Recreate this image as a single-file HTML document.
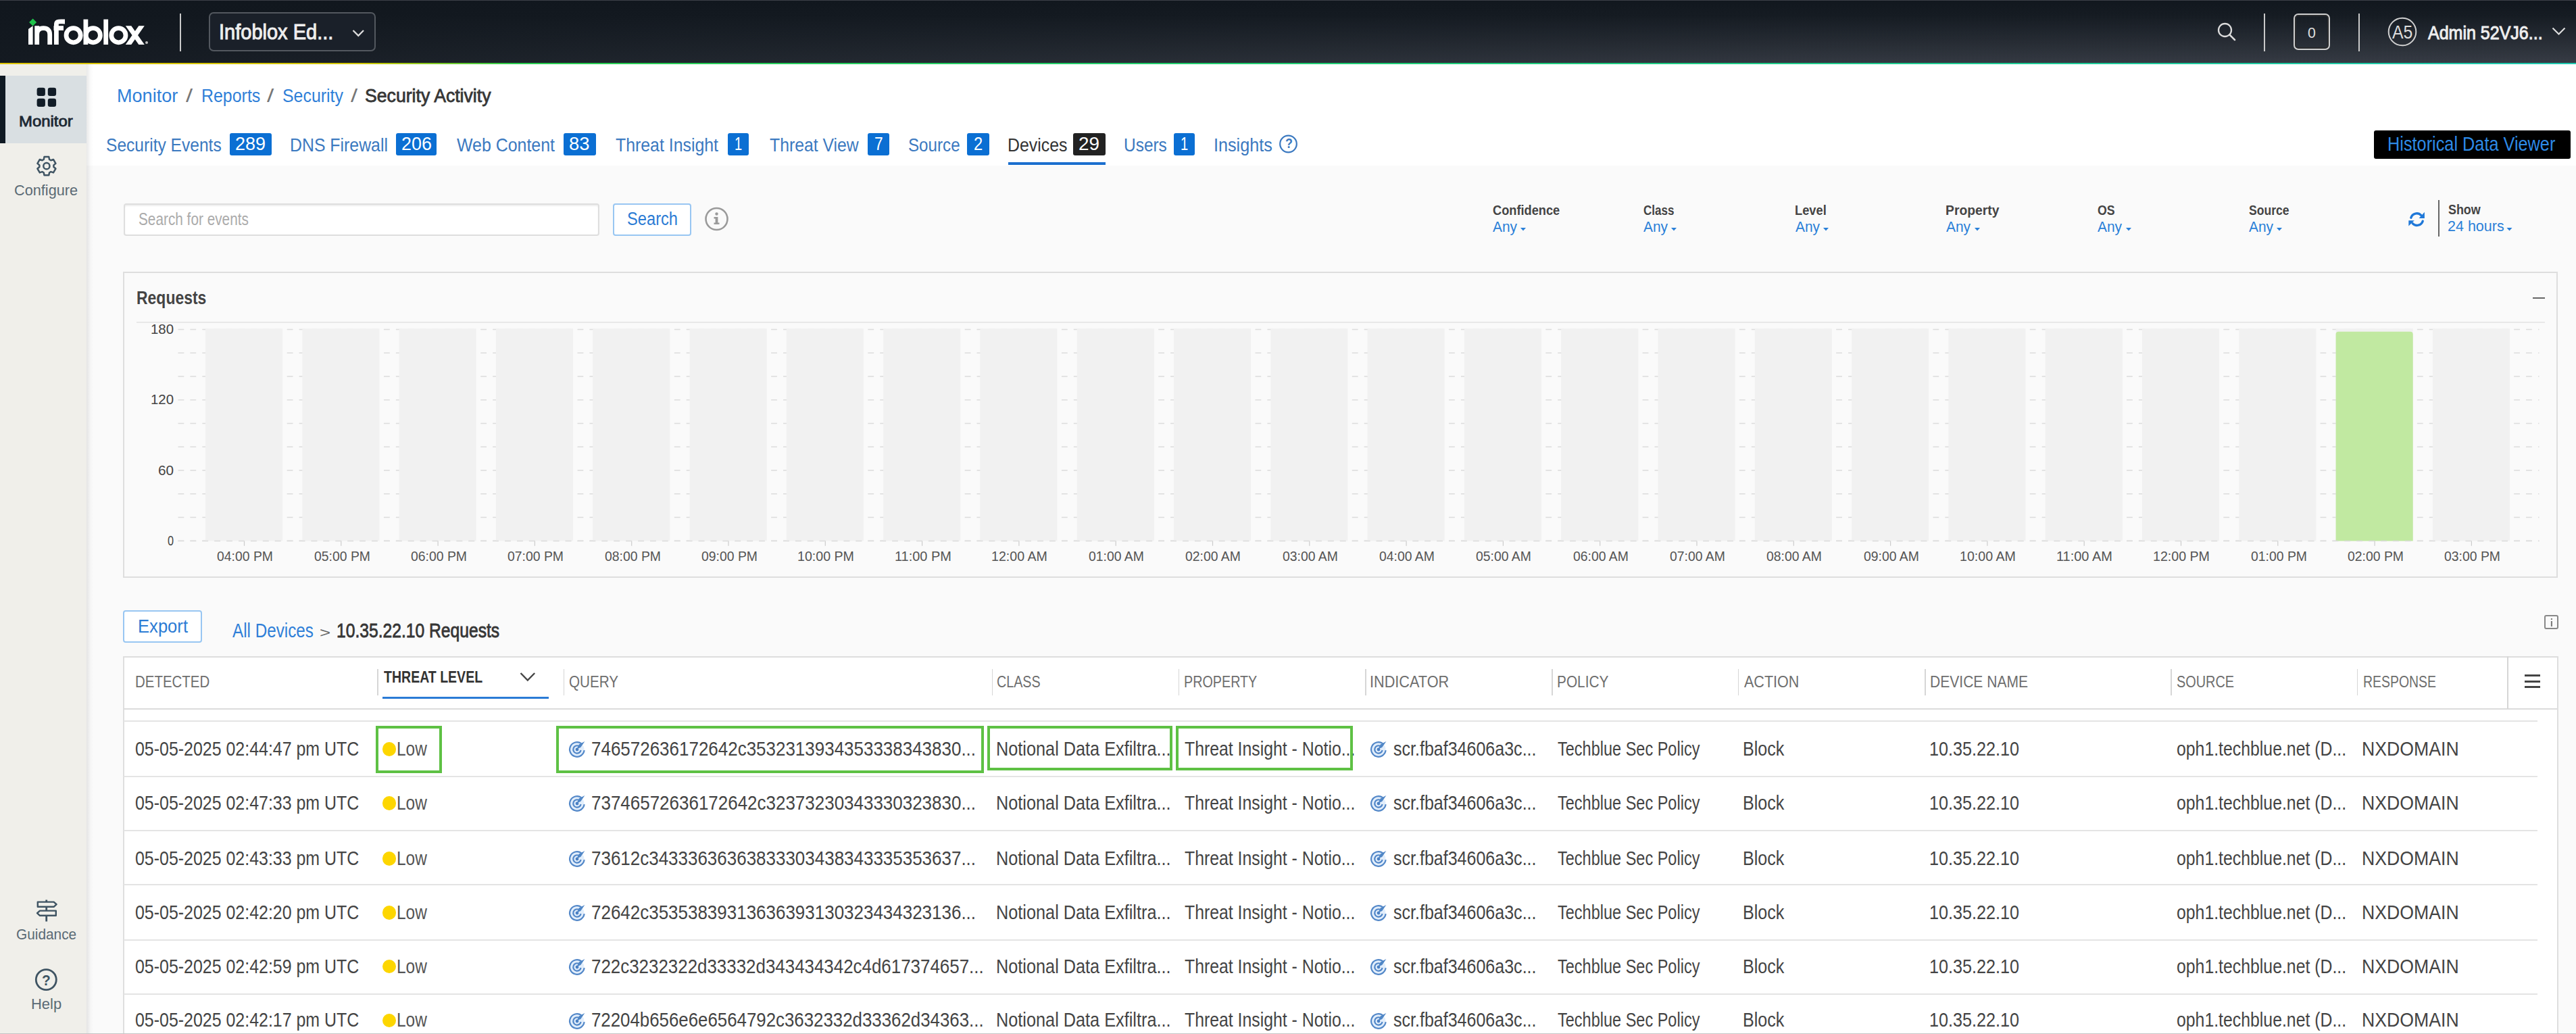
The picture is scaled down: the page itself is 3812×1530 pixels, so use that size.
<!DOCTYPE html>
<html><head><meta charset="utf-8"><title>Security Activity</title>
<style>
html,body{margin:0;padding:0;}
body{width:3812px;height:1530px;overflow:hidden;position:relative;background:#fafafa;font-family:"Liberation Sans",sans-serif;}
.t{position:absolute;white-space:nowrap;line-height:1;transform-origin:0 0;}
svg{position:absolute;overflow:visible;}
</style></head><body>
<div style="position:absolute;left:0.00px;top:0.00px;width:3812.00px;height:94.00px;background:linear-gradient(to right, rgba(17,23,30,0.92) 0%, rgba(17,23,30,0.5) 35%, rgba(17,23,30,0.1) 70%, rgba(17,23,30,0) 100%), linear-gradient(to bottom, #11171e 0%, #161c23 25%, #373c45 100%);"></div>
<div style="position:absolute;left:0.00px;top:0.00px;width:3812.00px;height:1.00px;background:#3c4048;"></div>
<div style="position:absolute;left:0.00px;top:93.00px;width:3812.00px;height:2.00px;background:linear-gradient(to right, #dcc400 0%, #d2c600 14%, #2bcc50 20%, #1fcc77 55%, #1fc9b0 100%);"></div>
<svg style="left:0;top:0" width="240" height="94" viewBox="0 0 240 94">
<g fill="none" stroke="#ffffff" stroke-width="6.8" stroke-linecap="butt">
<path d="M54.7 66 V38.3 M54.7 51 C54.7 44.5 58.5 41.7 64.2 41.7 C70.2 41.7 73.7 44.8 73.7 51 V66"/>
<path d="M83.4 66 V36 C83.4 31 86.5 32 96 32"/>
<path d="M79.5 41.6 H94"/>
<circle cx="108.6" cy="52.2" r="10.6"/>
<path d="M126.9 28.6 V66"/>
<circle cx="137.8" cy="52.2" r="10.6"/>
<path d="M156.7 28.6 V66"/>
<circle cx="175.4" cy="52.2" r="10.6"/>
</g>
<path d="M42 43 L48.6 38.3 V66 H42 Z" fill="#fff"/>
<path d="M185.8 38.3 H194.3 L213.8 66 H205.3 Z M205.3 38.3 H213.8 L194.3 66 H185.8 Z" fill="#fff"/>
<path d="M48.6 27.4 L54.1 32.9 L48.6 38.4 L43.1 32.9 Z" fill="#1ec24a"/>
<circle cx="217" cy="63" r="2" fill="#bbb"/>
</svg>
<div style="position:absolute;left:266.00px;top:20.00px;width:2.00px;height:56.00px;background:#c9c9c9;"></div>
<div style="position:absolute;left:308.60px;top:18.20px;width:247.10px;height:57.60px;box-sizing:border-box;border:2px solid #53585f;border-radius:7px;background:#1a2029;"></div>
<div class="t" style="left:323.69px;top:30.83px;font-size:31.98px;color:#eeeeee;transform:scaleX(0.9075);-webkit-text-stroke:1px #eeeeee;">Infoblox Ed...</div>
<svg style="left:0;top:0" width="600" height="94"><path d="M522.5 45 L530.3 52.8 L538 45" fill="none" stroke="#dddddd" stroke-width="2.3"/></svg>
<svg style="left:3270px;top:20px" width="60" height="60"><circle cx="22.5" cy="24.5" r="9.5" fill="none" stroke="#dcdcdc" stroke-width="2.3"/><path d="M29.5 31.5 L37 39" stroke="#dcdcdc" stroke-width="2.5" stroke-linecap="round"/></svg>
<div style="position:absolute;left:3350.00px;top:20.00px;width:2.00px;height:56.00px;background:#c9c9c9;"></div>
<div style="position:absolute;left:3394.00px;top:20.00px;width:54.00px;height:54.00px;box-sizing:border-box;border:2px solid #cfcfcf;border-radius:7px;box-shadow:inset 0 0 0 2px #2b2c2e;"></div>
<div class="t" style="left:3414.60px;top:37.54px;font-size:21.80px;color:#e0e0e0;transform:scaleX(0.9750);">0</div>
<div style="position:absolute;left:3490.00px;top:20.00px;width:2.00px;height:56.00px;background:#c9c9c9;"></div>
<svg style="left:3520px;top:10px" width="80" height="80"><circle cx="35" cy="37" r="20.3" fill="none" stroke="#d0d0d0" stroke-width="2"/></svg>
<div class="t" style="left:3539.50px;top:34.22px;font-size:27.62px;color:#dddddd;transform:scaleX(0.8978);">A5</div>
<div class="t" style="left:3593.00px;top:33.93px;font-size:28.20px;color:#eeeeee;transform:scaleX(0.8874);-webkit-text-stroke:1px #eeeeee;">Admin 52VJ6...</div>
<svg style="left:3760px;top:30px" width="50" height="40"><path d="M17.5 11.5 L26.5 20.5 L35.5 11.5" fill="none" stroke="#dddddd" stroke-width="2.2"/></svg>
<div style="position:absolute;left:0.00px;top:95.00px;width:128.00px;height:1435.00px;background:#f0efea;"></div>
<div style="position:absolute;left:0.00px;top:112.00px;width:128.00px;height:100.00px;background:#d9dfe2;"></div>
<div style="position:absolute;left:0.00px;top:112.00px;width:8.00px;height:100.00px;background:#0f1923;"></div>
<svg style="left:0;top:100px" width="127" height="80"><g fill="#111c27"><rect x="54.6" y="29.8" width="12.3" height="12.2" rx="3.2"/><rect x="70.8" y="29.8" width="12.3" height="12.2" rx="3.2"/><rect x="54.6" y="45.8" width="12.3" height="12.2" rx="3.2"/><rect x="70.8" y="45.8" width="12.3" height="12.2" rx="3.2"/></g></svg>
<div class="t" style="left:27.90px;top:168.94px;font-size:21.80px;color:#1c2833;transform:scaleX(1.0977);-webkit-text-stroke:0.8px #1c2833;">Monitor</div>
<svg style="left:0;top:200px" width="127" height="80"><path d="M65.51 32.12 L72.29 32.12 L73.04 35.94 L75.28 37.23 L78.97 35.97 L82.36 41.84 L79.42 44.41 L79.42 46.99 L82.36 49.56 L78.97 55.43 L75.28 54.17 L73.04 55.46 L72.29 59.28 L65.51 59.28 L64.76 55.46 L62.52 54.17 L58.83 55.43 L55.44 49.56 L58.38 46.99 L58.38 44.41 L55.44 41.84 L58.83 35.97 L62.52 37.23 L64.76 35.94 Z" fill="none" stroke="#3f5463" stroke-width="2.5" stroke-linejoin="round"/><circle cx="68.9" cy="45.7" r="4.6" fill="none" stroke="#3f5463" stroke-width="2.5"/></svg>
<div class="t" style="left:21.00px;top:270.54px;font-size:21.80px;color:#5a6a75;transform:scaleX(0.9959);">Configure</div>
<svg style="left:40px;top:1320px" width="60" height="60"><g stroke="#3f5463" stroke-width="2.4" stroke-linejoin="round"><path d="M28.7 11.5 V43.5" fill="none" stroke-width="2.8"/><path d="M15.8 14.6 H39.6 L43.6 18.2 L39.6 21.8 H15.8 Z" fill="#f0efea"/><path d="M42.8 27.6 H19 L15 31.2 L19 34.8 H42.8 Z" fill="#f0efea"/></g></svg>
<div class="t" style="left:23.73px;top:1373.19px;font-size:21.51px;color:#5a6a75;transform:scaleX(0.9691);">Guidance</div>
<svg style="left:40px;top:1420px" width="60" height="60"><circle cx="28.3" cy="29.6" r="15" fill="none" stroke="#3f5463" stroke-width="2.8"/></svg>
<div class="t" style="left:61.54px;top:1439.54px;font-size:21.80px;font-weight:700;color:#3f5463;transform:scaleX(0.9583);">?</div>
<div class="t" style="left:45.97px;top:1475.03px;font-size:21.22px;color:#5a6a75;transform:scaleX(1.0349);">Help</div>
<div style="position:absolute;left:128.00px;top:95.00px;width:3684.00px;height:150.00px;background:#ffffff;"></div>
<div style="position:absolute;left:128.00px;top:95.00px;width:10.00px;height:1435.00px;background:linear-gradient(to right, rgba(0,0,0,0.085), rgba(0,0,0,0.02) 60%, rgba(0,0,0,0));"></div>
<div class="t" style="left:173.15px;top:128.09px;font-size:27.76px;color:#2f7fd8;transform:scaleX(0.9757);">Monitor</div>
<div class="t" style="left:275.30px;top:128.09px;font-size:27.76px;color:#777;transform:scaleX(1.3125);">/</div>
<div class="t" style="left:297.50px;top:128.09px;font-size:27.76px;color:#2f7fd8;transform:scaleX(0.8983);">Reports</div>
<div class="t" style="left:395.00px;top:128.09px;font-size:27.76px;color:#777;transform:scaleX(1.3375);">/</div>
<div class="t" style="left:418.10px;top:128.09px;font-size:27.76px;color:#2f7fd8;transform:scaleX(0.8977);">Security</div>
<div class="t" style="left:518.70px;top:128.09px;font-size:27.76px;color:#777;transform:scaleX(1.3125);">/</div>
<div class="t" style="left:540.34px;top:128.09px;font-size:27.76px;color:#363636;transform:scaleX(0.9597);-webkit-text-stroke:0.8px #363636;">Security Activity</div>
<div class="t" style="left:156.64px;top:199.58px;font-size:28.49px;color:#3b79c0;transform:scaleX(0.8624);">Security Events</div>
<div style="position:absolute;left:340.00px;top:196.50px;width:61.50px;height:33.50px;background:#0b6fd3;border-radius:3px;"></div>
<div class="t" style="left:348.40px;top:200.43px;font-size:26.89px;color:#ffffff;transform:scaleX(1.0048);">289</div>
<div class="t" style="left:429.26px;top:199.58px;font-size:28.49px;color:#3b79c0;transform:scaleX(0.8724);">DNS Firewall</div>
<div style="position:absolute;left:586.00px;top:196.50px;width:59.60px;height:33.50px;background:#0b6fd3;border-radius:3px;"></div>
<div class="t" style="left:593.50px;top:200.43px;font-size:26.89px;color:#ffffff;transform:scaleX(1.0025);">206</div>
<div class="t" style="left:676.00px;top:199.58px;font-size:28.49px;color:#3b79c0;transform:scaleX(0.8749);">Web Content</div>
<div style="position:absolute;left:834.00px;top:196.50px;width:47.50px;height:33.50px;background:#0b6fd3;border-radius:3px;"></div>
<div class="t" style="left:842.48px;top:200.43px;font-size:26.89px;color:#ffffff;transform:scaleX(1.0198);">83</div>
<div class="t" style="left:911.00px;top:199.58px;font-size:28.49px;color:#3b79c0;transform:scaleX(0.8728);">Threat Insight</div>
<div style="position:absolute;left:1077.00px;top:196.50px;width:31.00px;height:33.50px;background:#0b6fd3;border-radius:3px;"></div>
<div class="t" style="left:1086.50px;top:200.43px;font-size:26.89px;color:#ffffff;transform:scaleX(0.7500);">1</div>
<div class="t" style="left:1139.00px;top:199.58px;font-size:28.49px;color:#3b79c0;transform:scaleX(0.8695);">Threat View</div>
<div style="position:absolute;left:1284.00px;top:196.50px;width:32.00px;height:33.50px;background:#0b6fd3;border-radius:3px;"></div>
<div class="t" style="left:1293.65px;top:200.43px;font-size:26.89px;color:#ffffff;transform:scaleX(0.8462);">7</div>
<div class="t" style="left:1344.15px;top:199.58px;font-size:28.49px;color:#3b79c0;transform:scaleX(0.8487);">Source</div>
<div style="position:absolute;left:1431.00px;top:196.50px;width:33.00px;height:33.50px;background:#0b6fd3;border-radius:3px;"></div>
<div class="t" style="left:1441.12px;top:200.43px;font-size:26.89px;color:#ffffff;transform:scaleX(0.8846);">2</div>
<div class="t" style="left:1490.75px;top:199.58px;font-size:28.49px;color:#333333;transform:scaleX(0.8736);">Devices</div>
<div style="position:absolute;left:1588.00px;top:196.50px;width:48.00px;height:33.50px;background:#222222;border-radius:3px;"></div>
<div class="t" style="left:1596.46px;top:200.43px;font-size:26.89px;color:#ffffff;transform:scaleX(1.0377);">29</div>
<div style="position:absolute;left:1492.00px;top:240.00px;width:144.00px;height:4.00px;background:#1b6fce;"></div>
<div class="t" style="left:1662.88px;top:199.58px;font-size:28.49px;color:#3b79c0;transform:scaleX(0.8584);">Users</div>
<div style="position:absolute;left:1737.00px;top:196.50px;width:31.00px;height:33.50px;background:#0b6fd3;border-radius:3px;"></div>
<div class="t" style="left:1746.50px;top:200.43px;font-size:26.89px;color:#ffffff;transform:scaleX(0.7500);">1</div>
<div class="t" style="left:1796.23px;top:199.58px;font-size:28.49px;color:#3b79c0;transform:scaleX(0.8834);">Insights</div>
<svg style="left:1880px;top:190px" width="50" height="50"><circle cx="26.5" cy="23" r="12.3" fill="none" stroke="#3b79c0" stroke-width="2.2"/></svg>
<div class="t" style="left:1901.50px;top:203.19px;font-size:19.62px;font-weight:700;color:#3b79c0;transform:scaleX(0.9091);">?</div>
<div style="position:absolute;left:3512.50px;top:192.60px;width:291.20px;height:42.20px;background:#000;border-radius:3px;"></div>
<div class="t" style="left:3532.86px;top:199.39px;font-size:29.07px;color:#2d8ae6;transform:scaleX(0.8704);">Historical Data Viewer</div>
<div style="position:absolute;left:182.60px;top:300.80px;width:704.40px;height:47.80px;box-sizing:border-box;background:#fff;border:2px solid #dedede;border-radius:4px;box-shadow:inset 0 2px 2px rgba(0,0,0,0.07);"></div>
<div class="t" style="left:205.21px;top:310.85px;font-size:26.16px;color:#ababab;transform:scaleX(0.7944);">Search for events</div>
<div style="position:absolute;left:906.70px;top:300.80px;width:116.30px;height:48.50px;box-sizing:border-box;background:#fff;border:2px solid #98c6f2;border-radius:4px;"></div>
<div class="t" style="left:928.14px;top:310.22px;font-size:27.62px;color:#2b7bd4;transform:scaleX(0.8576);">Search</div>
<svg style="left:1030px;top:300px" width="60" height="50"><circle cx="30.5" cy="24" r="16" fill="none" stroke="#9a9a9a" stroke-width="2.6"/><rect x="28.6" y="21" width="3.8" height="10.5" fill="#9a9a9a"/><rect x="26.5" y="21" width="4" height="2.6" fill="#9a9a9a"/><rect x="26.5" y="29.5" width="8" height="2.4" fill="#9a9a9a"/><circle cx="30.5" cy="16.5" r="2.2" fill="#9a9a9a"/></svg>
<div class="t" style="left:2208.60px;top:301.71px;font-size:19.48px;font-weight:700;color:#444444;transform:scaleX(0.9362);">Confidence</div>
<div class="t" style="left:2208.60px;top:325.61px;font-size:21.37px;color:#2a80d8;transform:scaleX(0.9805);">Any</div>
<svg style="left:2248.0px;top:332px" width="14" height="14"><path d="M2 5 L10 5 L6 9.5 Z" fill="#2a80d8"/></svg>
<div class="t" style="left:2432.00px;top:301.71px;font-size:19.48px;font-weight:700;color:#444444;transform:scaleX(0.8768);">Class</div>
<div class="t" style="left:2432.00px;top:325.61px;font-size:21.37px;color:#2a80d8;transform:scaleX(0.9805);">Any</div>
<svg style="left:2471.4px;top:332px" width="14" height="14"><path d="M2 5 L10 5 L6 9.5 Z" fill="#2a80d8"/></svg>
<div class="t" style="left:2655.66px;top:301.71px;font-size:19.48px;font-weight:700;color:#444444;transform:scaleX(0.9385);">Level</div>
<div class="t" style="left:2656.60px;top:325.61px;font-size:21.37px;color:#2a80d8;transform:scaleX(0.9805);">Any</div>
<svg style="left:2696.0px;top:332px" width="14" height="14"><path d="M2 5 L10 5 L6 9.5 Z" fill="#2a80d8"/></svg>
<div class="t" style="left:2879.41px;top:301.71px;font-size:19.48px;font-weight:700;color:#444444;transform:scaleX(0.9920);">Property</div>
<div class="t" style="left:2880.40px;top:325.61px;font-size:21.37px;color:#2a80d8;transform:scaleX(0.9805);">Any</div>
<svg style="left:2919.8px;top:332px" width="14" height="14"><path d="M2 5 L10 5 L6 9.5 Z" fill="#2a80d8"/></svg>
<div class="t" style="left:3104.40px;top:301.71px;font-size:19.48px;font-weight:700;color:#444444;transform:scaleX(0.9096);">OS</div>
<div class="t" style="left:3104.40px;top:325.61px;font-size:21.37px;color:#2a80d8;transform:scaleX(0.9805);">Any</div>
<svg style="left:3143.8px;top:332px" width="14" height="14"><path d="M2 5 L10 5 L6 9.5 Z" fill="#2a80d8"/></svg>
<div class="t" style="left:3328.00px;top:301.71px;font-size:19.48px;font-weight:700;color:#444444;transform:scaleX(0.9037);">Source</div>
<div class="t" style="left:3328.00px;top:325.61px;font-size:21.37px;color:#2a80d8;transform:scaleX(0.9805);">Any</div>
<svg style="left:3367.4px;top:332px" width="14" height="14"><path d="M2 5 L10 5 L6 9.5 Z" fill="#2a80d8"/></svg>
<svg style="left:3556px;top:306px" width="40" height="40"><g fill="none" stroke="#1f78d8" stroke-width="3.4" stroke-linecap="round"><path d="M11.8 16.2 A8.9 8.9 0 0 1 26.8 12.6"/><path d="M29.2 21.2 A8.9 8.9 0 0 1 14.2 24.6"/></g><path d="M31.9 7.8 V16.9 H23.6 Z" fill="#1f78d8"/><path d="M8.3 20.2 H16.8 L8.3 28.6 Z" fill="#1f78d8"/></svg>
<div style="position:absolute;left:3608.00px;top:296.00px;width:2.00px;height:53.50px;background:#666;"></div>
<div class="t" style="left:3623.00px;top:300.91px;font-size:19.48px;font-weight:700;color:#444444;transform:scaleX(0.9191);">Show</div>
<div class="t" style="left:3621.99px;top:324.71px;font-size:21.37px;color:#2a80d8;transform:scaleX(1.0068);">24 hours</div>
<svg style="left:3708px;top:332px" width="14" height="14"><path d="M1.5 5 L9.5 5 L5.5 9.5 Z" fill="#2a80d8"/></svg>
<div style="position:absolute;left:182.00px;top:402.00px;width:3603.00px;height:453.30px;box-sizing:border-box;background:#fafafa;border:2px solid #dedede;"></div>
<div class="t" style="left:202.19px;top:426.13px;font-size:28.20px;font-weight:700;color:#444444;transform:scaleX(0.8146);">Requests</div>
<div style="position:absolute;left:3748.00px;top:439.60px;width:18.00px;height:2.60px;background:#666;"></div>
<div style="position:absolute;left:202.00px;top:475.50px;width:3564.00px;height:2.00px;background:#e8e8e8;"></div>
<svg style="left:0;top:0" width="3812" height="900"><line x1="263.5" y1="487.40" x2="3757.5" y2="487.40" stroke="#dcdcdc" stroke-width="1.5" stroke-dasharray="8.8 9.11"/><line x1="263.5" y1="522.17" x2="3757.5" y2="522.17" stroke="#dcdcdc" stroke-width="1.5" stroke-dasharray="8.8 9.11"/><line x1="263.5" y1="556.94" x2="3757.5" y2="556.94" stroke="#dcdcdc" stroke-width="1.5" stroke-dasharray="8.8 9.11"/><line x1="263.5" y1="591.71" x2="3757.5" y2="591.71" stroke="#dcdcdc" stroke-width="1.5" stroke-dasharray="8.8 9.11"/><line x1="263.5" y1="626.48" x2="3757.5" y2="626.48" stroke="#dcdcdc" stroke-width="1.5" stroke-dasharray="8.8 9.11"/><line x1="263.5" y1="661.25" x2="3757.5" y2="661.25" stroke="#dcdcdc" stroke-width="1.5" stroke-dasharray="8.8 9.11"/><line x1="263.5" y1="696.02" x2="3757.5" y2="696.02" stroke="#dcdcdc" stroke-width="1.5" stroke-dasharray="8.8 9.11"/><line x1="263.5" y1="730.79" x2="3757.5" y2="730.79" stroke="#dcdcdc" stroke-width="1.5" stroke-dasharray="8.8 9.11"/><line x1="263.5" y1="765.56" x2="3757.5" y2="765.56" stroke="#dcdcdc" stroke-width="1.5" stroke-dasharray="8.8 9.11"/><line x1="263.5" y1="800.33" x2="3757.5" y2="800.33" stroke="#dcdcdc" stroke-width="1.5" stroke-dasharray="8.8 9.11"/><rect x="304.00" y="486.2" width="114.1" height="314.2" fill="#f1f1f1"/><line x1="361.50" y1="800.4" x2="361.50" y2="807.7" stroke="#cccccc" stroke-width="1.2"/><rect x="447.30" y="486.2" width="114.1" height="314.2" fill="#f1f1f1"/><line x1="504.80" y1="800.4" x2="504.80" y2="807.7" stroke="#cccccc" stroke-width="1.2"/><rect x="590.60" y="486.2" width="114.1" height="314.2" fill="#f1f1f1"/><line x1="648.10" y1="800.4" x2="648.10" y2="807.7" stroke="#cccccc" stroke-width="1.2"/><rect x="733.90" y="486.2" width="114.1" height="314.2" fill="#f1f1f1"/><line x1="791.40" y1="800.4" x2="791.40" y2="807.7" stroke="#cccccc" stroke-width="1.2"/><rect x="877.20" y="486.2" width="114.1" height="314.2" fill="#f1f1f1"/><line x1="934.70" y1="800.4" x2="934.70" y2="807.7" stroke="#cccccc" stroke-width="1.2"/><rect x="1020.50" y="486.2" width="114.1" height="314.2" fill="#f1f1f1"/><line x1="1078.00" y1="800.4" x2="1078.00" y2="807.7" stroke="#cccccc" stroke-width="1.2"/><rect x="1163.80" y="486.2" width="114.1" height="314.2" fill="#f1f1f1"/><line x1="1221.30" y1="800.4" x2="1221.30" y2="807.7" stroke="#cccccc" stroke-width="1.2"/><rect x="1307.10" y="486.2" width="114.1" height="314.2" fill="#f1f1f1"/><line x1="1364.60" y1="800.4" x2="1364.60" y2="807.7" stroke="#cccccc" stroke-width="1.2"/><rect x="1450.40" y="486.2" width="114.1" height="314.2" fill="#f1f1f1"/><line x1="1507.90" y1="800.4" x2="1507.90" y2="807.7" stroke="#cccccc" stroke-width="1.2"/><rect x="1593.70" y="486.2" width="114.1" height="314.2" fill="#f1f1f1"/><line x1="1651.20" y1="800.4" x2="1651.20" y2="807.7" stroke="#cccccc" stroke-width="1.2"/><rect x="1737.00" y="486.2" width="114.1" height="314.2" fill="#f1f1f1"/><line x1="1794.50" y1="800.4" x2="1794.50" y2="807.7" stroke="#cccccc" stroke-width="1.2"/><rect x="1880.30" y="486.2" width="114.1" height="314.2" fill="#f1f1f1"/><line x1="1937.80" y1="800.4" x2="1937.80" y2="807.7" stroke="#cccccc" stroke-width="1.2"/><rect x="2023.60" y="486.2" width="114.1" height="314.2" fill="#f1f1f1"/><line x1="2081.10" y1="800.4" x2="2081.10" y2="807.7" stroke="#cccccc" stroke-width="1.2"/><rect x="2166.90" y="486.2" width="114.1" height="314.2" fill="#f1f1f1"/><line x1="2224.40" y1="800.4" x2="2224.40" y2="807.7" stroke="#cccccc" stroke-width="1.2"/><rect x="2310.20" y="486.2" width="114.1" height="314.2" fill="#f1f1f1"/><line x1="2367.70" y1="800.4" x2="2367.70" y2="807.7" stroke="#cccccc" stroke-width="1.2"/><rect x="2453.50" y="486.2" width="114.1" height="314.2" fill="#f1f1f1"/><line x1="2511.00" y1="800.4" x2="2511.00" y2="807.7" stroke="#cccccc" stroke-width="1.2"/><rect x="2596.80" y="486.2" width="114.1" height="314.2" fill="#f1f1f1"/><line x1="2654.30" y1="800.4" x2="2654.30" y2="807.7" stroke="#cccccc" stroke-width="1.2"/><rect x="2740.10" y="486.2" width="114.1" height="314.2" fill="#f1f1f1"/><line x1="2797.60" y1="800.4" x2="2797.60" y2="807.7" stroke="#cccccc" stroke-width="1.2"/><rect x="2883.40" y="486.2" width="114.1" height="314.2" fill="#f1f1f1"/><line x1="2940.90" y1="800.4" x2="2940.90" y2="807.7" stroke="#cccccc" stroke-width="1.2"/><rect x="3026.70" y="486.2" width="114.1" height="314.2" fill="#f1f1f1"/><line x1="3084.20" y1="800.4" x2="3084.20" y2="807.7" stroke="#cccccc" stroke-width="1.2"/><rect x="3170.00" y="486.2" width="114.1" height="314.2" fill="#f1f1f1"/><line x1="3227.50" y1="800.4" x2="3227.50" y2="807.7" stroke="#cccccc" stroke-width="1.2"/><rect x="3313.30" y="486.2" width="114.1" height="314.2" fill="#f1f1f1"/><line x1="3370.80" y1="800.4" x2="3370.80" y2="807.7" stroke="#cccccc" stroke-width="1.2"/><rect x="3456.60" y="486.2" width="114.1" height="314.2" fill="#f1f1f1"/><path d="M3456.60 800.4 V494.8 Q3456.60 490.8 3460.60 490.8 H3566.70 Q3570.70 490.8 3570.70 494.8 V800.4 Z" fill="#c1e9a1"/><line x1="3514.10" y1="800.4" x2="3514.10" y2="807.7" stroke="#cccccc" stroke-width="1.2"/><rect x="3599.90" y="486.2" width="114.1" height="314.2" fill="#f1f1f1"/><line x1="3657.40" y1="800.4" x2="3657.40" y2="807.7" stroke="#cccccc" stroke-width="1.2"/><line x1="263.5" y1="800.4" x2="3757.5" y2="800.4" stroke="#dcdcdc" stroke-width="1.5" stroke-dasharray="8.8 9.11"/></svg>
<div class="t" style="left:223.00px;top:477.17px;font-size:20.35px;color:#444444;transform:scaleX(1.0027);">180</div>
<div class="t" style="left:223.00px;top:581.47px;font-size:20.35px;color:#444444;transform:scaleX(1.0027);">120</div>
<div class="t" style="left:233.98px;top:685.77px;font-size:20.35px;color:#444444;transform:scaleX(1.0185);">60</div>
<div class="t" style="left:247.90px;top:790.17px;font-size:20.35px;color:#444444;transform:scaleX(0.8000);">0</div>
<div class="t" style="left:321.40px;top:812.57px;font-size:20.35px;color:#555555;transform:scaleX(0.9526);">04:00 PM</div>
<div class="t" style="left:464.70px;top:812.57px;font-size:20.35px;color:#555555;transform:scaleX(0.9526);">05:00 PM</div>
<div class="t" style="left:608.00px;top:812.57px;font-size:20.35px;color:#555555;transform:scaleX(0.9526);">06:00 PM</div>
<div class="t" style="left:751.30px;top:812.57px;font-size:20.35px;color:#555555;transform:scaleX(0.9526);">07:00 PM</div>
<div class="t" style="left:894.60px;top:812.57px;font-size:20.35px;color:#555555;transform:scaleX(0.9526);">08:00 PM</div>
<div class="t" style="left:1037.90px;top:812.57px;font-size:20.35px;color:#555555;transform:scaleX(0.9526);">09:00 PM</div>
<div class="t" style="left:1180.24px;top:812.57px;font-size:20.35px;color:#555555;transform:scaleX(0.9638);">10:00 PM</div>
<div class="t" style="left:1323.52px;top:812.57px;font-size:20.35px;color:#555555;transform:scaleX(0.9812);">11:00 PM</div>
<div class="t" style="left:1466.84px;top:812.57px;font-size:20.35px;color:#555555;transform:scaleX(0.9638);">12:00 AM</div>
<div class="t" style="left:1611.10px;top:812.57px;font-size:20.35px;color:#555555;transform:scaleX(0.9526);">01:00 AM</div>
<div class="t" style="left:1754.40px;top:812.57px;font-size:20.35px;color:#555555;transform:scaleX(0.9526);">02:00 AM</div>
<div class="t" style="left:1897.70px;top:812.57px;font-size:20.35px;color:#555555;transform:scaleX(0.9526);">03:00 AM</div>
<div class="t" style="left:2041.00px;top:812.57px;font-size:20.35px;color:#555555;transform:scaleX(0.9526);">04:00 AM</div>
<div class="t" style="left:2184.30px;top:812.57px;font-size:20.35px;color:#555555;transform:scaleX(0.9526);">05:00 AM</div>
<div class="t" style="left:2327.60px;top:812.57px;font-size:20.35px;color:#555555;transform:scaleX(0.9526);">06:00 AM</div>
<div class="t" style="left:2470.90px;top:812.57px;font-size:20.35px;color:#555555;transform:scaleX(0.9526);">07:00 AM</div>
<div class="t" style="left:2614.20px;top:812.57px;font-size:20.35px;color:#555555;transform:scaleX(0.9526);">08:00 AM</div>
<div class="t" style="left:2757.50px;top:812.57px;font-size:20.35px;color:#555555;transform:scaleX(0.9526);">09:00 AM</div>
<div class="t" style="left:2899.84px;top:812.57px;font-size:20.35px;color:#555555;transform:scaleX(0.9638);">10:00 AM</div>
<div class="t" style="left:3043.12px;top:812.57px;font-size:20.35px;color:#555555;transform:scaleX(0.9812);">11:00 AM</div>
<div class="t" style="left:3186.44px;top:812.57px;font-size:20.35px;color:#555555;transform:scaleX(0.9638);">12:00 PM</div>
<div class="t" style="left:3330.70px;top:812.57px;font-size:20.35px;color:#555555;transform:scaleX(0.9526);">01:00 PM</div>
<div class="t" style="left:3474.00px;top:812.57px;font-size:20.35px;color:#555555;transform:scaleX(0.9526);">02:00 PM</div>
<div class="t" style="left:3617.30px;top:812.57px;font-size:20.35px;color:#555555;transform:scaleX(0.9526);">03:00 PM</div>
<div style="position:absolute;left:182.40px;top:902.70px;width:116.60px;height:48.10px;box-sizing:border-box;background:#fff;border:2px solid #98c6f2;border-radius:4px;"></div>
<div class="t" style="left:203.89px;top:912.00px;font-size:28.34px;color:#2b7bd4;transform:scaleX(0.9037);">Export</div>
<div class="t" style="left:344.00px;top:919.46px;font-size:28.63px;color:#2f7fd8;transform:scaleX(0.8474);">All Devices</div>
<div class="t" style="left:472.64px;top:926.47px;font-size:20.35px;color:#666666;transform:scaleX(1.3600);">&gt;</div>
<div class="t" style="left:497.68px;top:919.46px;font-size:28.63px;color:#363636;transform:scaleX(0.8611);-webkit-text-stroke:0.8px #363636;">10.35.22.10 Requests</div>
<div style="position:absolute;left:3765.00px;top:910.30px;width:21.40px;height:20.90px;box-sizing:border-box;border:2px solid #888;border-radius:3px;"></div>
<svg style="left:3765px;top:910px" width="22" height="22"><rect x="9.9" y="5" width="2" height="2" fill="#777"/><rect x="9.9" y="9" width="2" height="8" fill="#777"/></svg>
<div style="position:absolute;left:182.00px;top:971.00px;width:3603.50px;height:569.00px;box-sizing:border-box;background:#fff;border:2px solid #dedede;"></div>
<div style="position:absolute;left:183.00px;top:1048.00px;width:3601.40px;height:2.00px;background:#dcdcdc;"></div>
<div style="position:absolute;left:183.00px;top:1066.00px;width:3572.30px;height:2.00px;background:#e4e4e4;"></div>
<div style="position:absolute;left:558.40px;top:990.00px;width:1.20px;height:39.00px;background:#d6d6d6;"></div>
<div style="position:absolute;left:833.70px;top:990.00px;width:1.20px;height:39.00px;background:#d6d6d6;"></div>
<div style="position:absolute;left:1468.10px;top:990.00px;width:1.20px;height:39.00px;background:#d6d6d6;"></div>
<div style="position:absolute;left:1744.10px;top:990.00px;width:1.20px;height:39.00px;background:#d6d6d6;"></div>
<div style="position:absolute;left:2020.40px;top:990.00px;width:1.20px;height:39.00px;background:#d6d6d6;"></div>
<div style="position:absolute;left:2296.40px;top:990.00px;width:1.20px;height:39.00px;background:#d6d6d6;"></div>
<div style="position:absolute;left:2572.00px;top:990.00px;width:1.20px;height:39.00px;background:#d6d6d6;"></div>
<div style="position:absolute;left:2848.40px;top:990.00px;width:1.20px;height:39.00px;background:#d6d6d6;"></div>
<div style="position:absolute;left:3212.40px;top:990.00px;width:1.20px;height:39.00px;background:#d6d6d6;"></div>
<div style="position:absolute;left:3488.00px;top:990.00px;width:1.20px;height:39.00px;background:#d6d6d6;"></div>
<div style="position:absolute;left:3710.40px;top:971.00px;width:1.20px;height:78.00px;background:#d6d6d6;"></div>
<div class="t" style="left:200.42px;top:997.91px;font-size:23.26px;color:#6e6e6e;transform:scaleX(0.8801);">DETECTED</div>
<div class="t" style="left:567.80px;top:991.11px;font-size:23.26px;font-weight:700;color:#333333;transform:scaleX(0.8398);">THREAT LEVEL</div>
<svg style="left:760px;top:985px" width="40" height="30"><path d="M10.5 11 L20.8 21.5 L31.2 11" fill="none" stroke="#444" stroke-width="2.4"/></svg>
<div style="position:absolute;left:566.00px;top:1030.80px;width:245.50px;height:2.80px;background:#2a7bd6;"></div>
<div class="t" style="left:842.11px;top:997.91px;font-size:23.26px;color:#6e6e6e;transform:scaleX(0.8867);">QUERY</div>
<div class="t" style="left:1475.15px;top:997.91px;font-size:23.26px;color:#6e6e6e;transform:scaleX(0.8483);">CLASS</div>
<div class="t" style="left:1752.15px;top:997.91px;font-size:23.26px;color:#6e6e6e;transform:scaleX(0.8494);">PROPERTY</div>
<div class="t" style="left:2027.14px;top:997.91px;font-size:23.26px;color:#6e6e6e;transform:scaleX(0.9322);">INDICATOR</div>
<div class="t" style="left:2303.80px;top:997.91px;font-size:23.26px;color:#6e6e6e;transform:scaleX(0.8953);">POLICY</div>
<div class="t" style="left:2581.00px;top:997.91px;font-size:23.26px;color:#6e6e6e;transform:scaleX(0.9263);">ACTION</div>
<div class="t" style="left:2855.69px;top:997.91px;font-size:23.26px;color:#6e6e6e;transform:scaleX(0.9055);">DEVICE NAME</div>
<div class="t" style="left:3221.14px;top:997.91px;font-size:23.26px;color:#6e6e6e;transform:scaleX(0.8554);">SOURCE</div>
<div class="t" style="left:3497.46px;top:997.91px;font-size:23.26px;color:#6e6e6e;transform:scaleX(0.8356);">RESPONSE</div>
<div style="position:absolute;left:3736.00px;top:998.40px;width:23.20px;height:3.00px;background:#444;"></div>
<div style="position:absolute;left:3736.00px;top:1006.60px;width:23.20px;height:3.00px;background:#444;"></div>
<div style="position:absolute;left:3736.00px;top:1014.80px;width:23.20px;height:3.00px;background:#444;"></div>
<div style="position:absolute;left:183.00px;top:1147.90px;width:3572.30px;height:2.00px;background:#e4e4e4;"></div>
<div style="position:absolute;left:183.00px;top:1227.90px;width:3572.30px;height:2.00px;background:#e4e4e4;"></div>
<div style="position:absolute;left:183.00px;top:1307.90px;width:3572.30px;height:2.00px;background:#e4e4e4;"></div>
<div style="position:absolute;left:183.00px;top:1389.90px;width:3572.30px;height:2.00px;background:#e4e4e4;"></div>
<div style="position:absolute;left:183.00px;top:1469.70px;width:3572.30px;height:2.00px;background:#e4e4e4;"></div>
<div class="t" style="left:199.54px;top:1094.19px;font-size:29.07px;color:#444444;transform:scaleX(0.8581);">05-05-2025 02:44:47 pm UTC</div>
<div style="position:absolute;left:565.6px;top:1098.20px;width:20.6px;height:20.6px;border-radius:50%;background:#fdd600;"></div>
<div class="t" style="left:586.62px;top:1094.19px;font-size:29.07px;color:#555555;transform:scaleX(0.8409);">Low</div>
<svg style="left:838.8px;top:1094.3px" width="30" height="30" viewBox="-15 -15 30 30"><circle cx="0" cy="0" r="10.6" fill="#e2eefb"/><g fill="none" stroke="#5287c8" stroke-width="2.2"><path d="M10.6 1.2 A10.8 10.8 0 1 1 6.2 -8.8"/><path d="M5.6 1 A5.7 5.7 0 1 1 2.2 -5.3"/></g><circle cx="0" cy="0" r="2.4" fill="#4a80c4"/><path d="M-0.5 -0.8 L2.8 -7.6 L11.4 -12 L5.2 -3 Z" fill="#4f86c6"/></svg>
<div class="t" style="left:874.81px;top:1094.19px;font-size:29.07px;color:#444444;transform:scaleX(0.8936);">746572636172642c3532313934353338343830...</div>
<div class="t" style="left:1474.26px;top:1094.19px;font-size:29.07px;color:#444444;transform:scaleX(0.8699);">Notional Data Exfiltra...</div>
<div class="t" style="left:1753.00px;top:1094.19px;font-size:29.07px;color:#444444;transform:scaleX(0.8538);">Threat Insight - Notio...</div>
<svg style="left:2024.7px;top:1094.3px" width="30" height="30" viewBox="-15 -15 30 30"><circle cx="0" cy="0" r="10.6" fill="#e2eefb"/><g fill="none" stroke="#5287c8" stroke-width="2.2"><path d="M10.6 1.2 A10.8 10.8 0 1 1 6.2 -8.8"/><path d="M5.6 1 A5.7 5.7 0 1 1 2.2 -5.3"/></g><circle cx="0" cy="0" r="2.4" fill="#4a80c4"/><path d="M-0.5 -0.8 L2.8 -7.6 L11.4 -12 L5.2 -3 Z" fill="#4f86c6"/></svg>
<div class="t" style="left:2062.00px;top:1094.19px;font-size:29.07px;color:#444444;transform:scaleX(0.8612);">scr.fbaf34606a3c...</div>
<div class="t" style="left:2304.70px;top:1094.19px;font-size:29.07px;color:#444444;transform:scaleX(0.8090);">Techblue Sec Policy</div>
<div class="t" style="left:2578.67px;top:1094.19px;font-size:29.07px;color:#444444;transform:scaleX(0.8643);">Block</div>
<div class="t" style="left:2855.07px;top:1094.19px;font-size:29.07px;color:#444444;transform:scaleX(0.8668);">10.35.22.10</div>
<div class="t" style="left:3220.65px;top:1094.19px;font-size:29.07px;color:#444444;transform:scaleX(0.8540);">oph1.techblue.net (D...</div>
<div class="t" style="left:3495.17px;top:1094.19px;font-size:29.07px;color:#444444;transform:scaleX(0.9172);">NXDOMAIN</div>
<div class="t" style="left:199.54px;top:1174.19px;font-size:29.07px;color:#444444;transform:scaleX(0.8581);">05-05-2025 02:47:33 pm UTC</div>
<div style="position:absolute;left:565.6px;top:1178.20px;width:20.6px;height:20.6px;border-radius:50%;background:#fdd600;"></div>
<div class="t" style="left:586.62px;top:1174.19px;font-size:29.07px;color:#555555;transform:scaleX(0.8409);">Low</div>
<svg style="left:838.8px;top:1174.3px" width="30" height="30" viewBox="-15 -15 30 30"><circle cx="0" cy="0" r="10.6" fill="#e2eefb"/><g fill="none" stroke="#5287c8" stroke-width="2.2"><path d="M10.6 1.2 A10.8 10.8 0 1 1 6.2 -8.8"/><path d="M5.6 1 A5.7 5.7 0 1 1 2.2 -5.3"/></g><circle cx="0" cy="0" r="2.4" fill="#4a80c4"/><path d="M-0.5 -0.8 L2.8 -7.6 L11.4 -12 L5.2 -3 Z" fill="#4f86c6"/></svg>
<div class="t" style="left:874.81px;top:1174.19px;font-size:29.07px;color:#444444;transform:scaleX(0.8936);">73746572636172642c32373230343330323830...</div>
<div class="t" style="left:1474.26px;top:1174.19px;font-size:29.07px;color:#444444;transform:scaleX(0.8699);">Notional Data Exfiltra...</div>
<div class="t" style="left:1753.00px;top:1174.19px;font-size:29.07px;color:#444444;transform:scaleX(0.8538);">Threat Insight - Notio...</div>
<svg style="left:2024.7px;top:1174.3px" width="30" height="30" viewBox="-15 -15 30 30"><circle cx="0" cy="0" r="10.6" fill="#e2eefb"/><g fill="none" stroke="#5287c8" stroke-width="2.2"><path d="M10.6 1.2 A10.8 10.8 0 1 1 6.2 -8.8"/><path d="M5.6 1 A5.7 5.7 0 1 1 2.2 -5.3"/></g><circle cx="0" cy="0" r="2.4" fill="#4a80c4"/><path d="M-0.5 -0.8 L2.8 -7.6 L11.4 -12 L5.2 -3 Z" fill="#4f86c6"/></svg>
<div class="t" style="left:2062.00px;top:1174.19px;font-size:29.07px;color:#444444;transform:scaleX(0.8612);">scr.fbaf34606a3c...</div>
<div class="t" style="left:2304.70px;top:1174.19px;font-size:29.07px;color:#444444;transform:scaleX(0.8090);">Techblue Sec Policy</div>
<div class="t" style="left:2578.67px;top:1174.19px;font-size:29.07px;color:#444444;transform:scaleX(0.8643);">Block</div>
<div class="t" style="left:2855.07px;top:1174.19px;font-size:29.07px;color:#444444;transform:scaleX(0.8668);">10.35.22.10</div>
<div class="t" style="left:3220.65px;top:1174.19px;font-size:29.07px;color:#444444;transform:scaleX(0.8540);">oph1.techblue.net (D...</div>
<div class="t" style="left:3495.17px;top:1174.19px;font-size:29.07px;color:#444444;transform:scaleX(0.9172);">NXDOMAIN</div>
<div class="t" style="left:199.54px;top:1255.99px;font-size:29.07px;color:#444444;transform:scaleX(0.8581);">05-05-2025 02:43:33 pm UTC</div>
<div style="position:absolute;left:565.6px;top:1260.00px;width:20.6px;height:20.6px;border-radius:50%;background:#fdd600;"></div>
<div class="t" style="left:586.62px;top:1255.99px;font-size:29.07px;color:#555555;transform:scaleX(0.8409);">Low</div>
<svg style="left:838.8px;top:1256.1px" width="30" height="30" viewBox="-15 -15 30 30"><circle cx="0" cy="0" r="10.6" fill="#e2eefb"/><g fill="none" stroke="#5287c8" stroke-width="2.2"><path d="M10.6 1.2 A10.8 10.8 0 1 1 6.2 -8.8"/><path d="M5.6 1 A5.7 5.7 0 1 1 2.2 -5.3"/></g><circle cx="0" cy="0" r="2.4" fill="#4a80c4"/><path d="M-0.5 -0.8 L2.8 -7.6 L11.4 -12 L5.2 -3 Z" fill="#4f86c6"/></svg>
<div class="t" style="left:874.81px;top:1255.99px;font-size:29.07px;color:#444444;transform:scaleX(0.8936);">73612c34333636363833303438343335353637...</div>
<div class="t" style="left:1474.26px;top:1255.99px;font-size:29.07px;color:#444444;transform:scaleX(0.8699);">Notional Data Exfiltra...</div>
<div class="t" style="left:1753.00px;top:1255.99px;font-size:29.07px;color:#444444;transform:scaleX(0.8538);">Threat Insight - Notio...</div>
<svg style="left:2024.7px;top:1256.1px" width="30" height="30" viewBox="-15 -15 30 30"><circle cx="0" cy="0" r="10.6" fill="#e2eefb"/><g fill="none" stroke="#5287c8" stroke-width="2.2"><path d="M10.6 1.2 A10.8 10.8 0 1 1 6.2 -8.8"/><path d="M5.6 1 A5.7 5.7 0 1 1 2.2 -5.3"/></g><circle cx="0" cy="0" r="2.4" fill="#4a80c4"/><path d="M-0.5 -0.8 L2.8 -7.6 L11.4 -12 L5.2 -3 Z" fill="#4f86c6"/></svg>
<div class="t" style="left:2062.00px;top:1255.99px;font-size:29.07px;color:#444444;transform:scaleX(0.8612);">scr.fbaf34606a3c...</div>
<div class="t" style="left:2304.70px;top:1255.99px;font-size:29.07px;color:#444444;transform:scaleX(0.8090);">Techblue Sec Policy</div>
<div class="t" style="left:2578.67px;top:1255.99px;font-size:29.07px;color:#444444;transform:scaleX(0.8643);">Block</div>
<div class="t" style="left:2855.07px;top:1255.99px;font-size:29.07px;color:#444444;transform:scaleX(0.8668);">10.35.22.10</div>
<div class="t" style="left:3220.65px;top:1255.99px;font-size:29.07px;color:#444444;transform:scaleX(0.8540);">oph1.techblue.net (D...</div>
<div class="t" style="left:3495.17px;top:1255.99px;font-size:29.07px;color:#444444;transform:scaleX(0.9172);">NXDOMAIN</div>
<div class="t" style="left:199.54px;top:1335.99px;font-size:29.07px;color:#444444;transform:scaleX(0.8581);">05-05-2025 02:42:20 pm UTC</div>
<div style="position:absolute;left:565.6px;top:1340.00px;width:20.6px;height:20.6px;border-radius:50%;background:#fdd600;"></div>
<div class="t" style="left:586.62px;top:1335.99px;font-size:29.07px;color:#555555;transform:scaleX(0.8409);">Low</div>
<svg style="left:838.8px;top:1336.1px" width="30" height="30" viewBox="-15 -15 30 30"><circle cx="0" cy="0" r="10.6" fill="#e2eefb"/><g fill="none" stroke="#5287c8" stroke-width="2.2"><path d="M10.6 1.2 A10.8 10.8 0 1 1 6.2 -8.8"/><path d="M5.6 1 A5.7 5.7 0 1 1 2.2 -5.3"/></g><circle cx="0" cy="0" r="2.4" fill="#4a80c4"/><path d="M-0.5 -0.8 L2.8 -7.6 L11.4 -12 L5.2 -3 Z" fill="#4f86c6"/></svg>
<div class="t" style="left:874.81px;top:1335.99px;font-size:29.07px;color:#444444;transform:scaleX(0.8936);">72642c35353839313636393130323434323136...</div>
<div class="t" style="left:1474.26px;top:1335.99px;font-size:29.07px;color:#444444;transform:scaleX(0.8699);">Notional Data Exfiltra...</div>
<div class="t" style="left:1753.00px;top:1335.99px;font-size:29.07px;color:#444444;transform:scaleX(0.8538);">Threat Insight - Notio...</div>
<svg style="left:2024.7px;top:1336.1px" width="30" height="30" viewBox="-15 -15 30 30"><circle cx="0" cy="0" r="10.6" fill="#e2eefb"/><g fill="none" stroke="#5287c8" stroke-width="2.2"><path d="M10.6 1.2 A10.8 10.8 0 1 1 6.2 -8.8"/><path d="M5.6 1 A5.7 5.7 0 1 1 2.2 -5.3"/></g><circle cx="0" cy="0" r="2.4" fill="#4a80c4"/><path d="M-0.5 -0.8 L2.8 -7.6 L11.4 -12 L5.2 -3 Z" fill="#4f86c6"/></svg>
<div class="t" style="left:2062.00px;top:1335.99px;font-size:29.07px;color:#444444;transform:scaleX(0.8612);">scr.fbaf34606a3c...</div>
<div class="t" style="left:2304.70px;top:1335.99px;font-size:29.07px;color:#444444;transform:scaleX(0.8090);">Techblue Sec Policy</div>
<div class="t" style="left:2578.67px;top:1335.99px;font-size:29.07px;color:#444444;transform:scaleX(0.8643);">Block</div>
<div class="t" style="left:2855.07px;top:1335.99px;font-size:29.07px;color:#444444;transform:scaleX(0.8668);">10.35.22.10</div>
<div class="t" style="left:3220.65px;top:1335.99px;font-size:29.07px;color:#444444;transform:scaleX(0.8540);">oph1.techblue.net (D...</div>
<div class="t" style="left:3495.17px;top:1335.99px;font-size:29.07px;color:#444444;transform:scaleX(0.9172);">NXDOMAIN</div>
<div class="t" style="left:199.54px;top:1415.69px;font-size:29.07px;color:#444444;transform:scaleX(0.8581);">05-05-2025 02:42:59 pm UTC</div>
<div style="position:absolute;left:565.6px;top:1419.70px;width:20.6px;height:20.6px;border-radius:50%;background:#fdd600;"></div>
<div class="t" style="left:586.62px;top:1415.69px;font-size:29.07px;color:#555555;transform:scaleX(0.8409);">Low</div>
<svg style="left:838.8px;top:1415.8px" width="30" height="30" viewBox="-15 -15 30 30"><circle cx="0" cy="0" r="10.6" fill="#e2eefb"/><g fill="none" stroke="#5287c8" stroke-width="2.2"><path d="M10.6 1.2 A10.8 10.8 0 1 1 6.2 -8.8"/><path d="M5.6 1 A5.7 5.7 0 1 1 2.2 -5.3"/></g><circle cx="0" cy="0" r="2.4" fill="#4a80c4"/><path d="M-0.5 -0.8 L2.8 -7.6 L11.4 -12 L5.2 -3 Z" fill="#4f86c6"/></svg>
<div class="t" style="left:874.81px;top:1415.69px;font-size:29.07px;color:#444444;transform:scaleX(0.8915);">722c3232322d33332d343434342c4d617374657...</div>
<div class="t" style="left:1474.26px;top:1415.69px;font-size:29.07px;color:#444444;transform:scaleX(0.8699);">Notional Data Exfiltra...</div>
<div class="t" style="left:1753.00px;top:1415.69px;font-size:29.07px;color:#444444;transform:scaleX(0.8538);">Threat Insight - Notio...</div>
<svg style="left:2024.7px;top:1415.8px" width="30" height="30" viewBox="-15 -15 30 30"><circle cx="0" cy="0" r="10.6" fill="#e2eefb"/><g fill="none" stroke="#5287c8" stroke-width="2.2"><path d="M10.6 1.2 A10.8 10.8 0 1 1 6.2 -8.8"/><path d="M5.6 1 A5.7 5.7 0 1 1 2.2 -5.3"/></g><circle cx="0" cy="0" r="2.4" fill="#4a80c4"/><path d="M-0.5 -0.8 L2.8 -7.6 L11.4 -12 L5.2 -3 Z" fill="#4f86c6"/></svg>
<div class="t" style="left:2062.00px;top:1415.69px;font-size:29.07px;color:#444444;transform:scaleX(0.8612);">scr.fbaf34606a3c...</div>
<div class="t" style="left:2304.70px;top:1415.69px;font-size:29.07px;color:#444444;transform:scaleX(0.8090);">Techblue Sec Policy</div>
<div class="t" style="left:2578.67px;top:1415.69px;font-size:29.07px;color:#444444;transform:scaleX(0.8643);">Block</div>
<div class="t" style="left:2855.07px;top:1415.69px;font-size:29.07px;color:#444444;transform:scaleX(0.8668);">10.35.22.10</div>
<div class="t" style="left:3220.65px;top:1415.69px;font-size:29.07px;color:#444444;transform:scaleX(0.8540);">oph1.techblue.net (D...</div>
<div class="t" style="left:3495.17px;top:1415.69px;font-size:29.07px;color:#444444;transform:scaleX(0.9172);">NXDOMAIN</div>
<div class="t" style="left:199.54px;top:1495.49px;font-size:29.07px;color:#444444;transform:scaleX(0.8581);">05-05-2025 02:42:17 pm UTC</div>
<div style="position:absolute;left:565.6px;top:1499.50px;width:20.6px;height:20.6px;border-radius:50%;background:#fdd600;"></div>
<div class="t" style="left:586.62px;top:1495.49px;font-size:29.07px;color:#555555;transform:scaleX(0.8409);">Low</div>
<svg style="left:838.8px;top:1495.6px" width="30" height="30" viewBox="-15 -15 30 30"><circle cx="0" cy="0" r="10.6" fill="#e2eefb"/><g fill="none" stroke="#5287c8" stroke-width="2.2"><path d="M10.6 1.2 A10.8 10.8 0 1 1 6.2 -8.8"/><path d="M5.6 1 A5.7 5.7 0 1 1 2.2 -5.3"/></g><circle cx="0" cy="0" r="2.4" fill="#4a80c4"/><path d="M-0.5 -0.8 L2.8 -7.6 L11.4 -12 L5.2 -3 Z" fill="#4f86c6"/></svg>
<div class="t" style="left:874.81px;top:1495.49px;font-size:29.07px;color:#444444;transform:scaleX(0.8892);">72204b656e6e6564792c3632332d33362d34363...</div>
<div class="t" style="left:1474.26px;top:1495.49px;font-size:29.07px;color:#444444;transform:scaleX(0.8699);">Notional Data Exfiltra...</div>
<div class="t" style="left:1753.00px;top:1495.49px;font-size:29.07px;color:#444444;transform:scaleX(0.8538);">Threat Insight - Notio...</div>
<svg style="left:2024.7px;top:1495.6px" width="30" height="30" viewBox="-15 -15 30 30"><circle cx="0" cy="0" r="10.6" fill="#e2eefb"/><g fill="none" stroke="#5287c8" stroke-width="2.2"><path d="M10.6 1.2 A10.8 10.8 0 1 1 6.2 -8.8"/><path d="M5.6 1 A5.7 5.7 0 1 1 2.2 -5.3"/></g><circle cx="0" cy="0" r="2.4" fill="#4a80c4"/><path d="M-0.5 -0.8 L2.8 -7.6 L11.4 -12 L5.2 -3 Z" fill="#4f86c6"/></svg>
<div class="t" style="left:2062.00px;top:1495.49px;font-size:29.07px;color:#444444;transform:scaleX(0.8612);">scr.fbaf34606a3c...</div>
<div class="t" style="left:2304.70px;top:1495.49px;font-size:29.07px;color:#444444;transform:scaleX(0.8090);">Techblue Sec Policy</div>
<div class="t" style="left:2578.67px;top:1495.49px;font-size:29.07px;color:#444444;transform:scaleX(0.8643);">Block</div>
<div class="t" style="left:2855.07px;top:1495.49px;font-size:29.07px;color:#444444;transform:scaleX(0.8668);">10.35.22.10</div>
<div class="t" style="left:3220.65px;top:1495.49px;font-size:29.07px;color:#444444;transform:scaleX(0.8540);">oph1.techblue.net (D...</div>
<div class="t" style="left:3495.17px;top:1495.49px;font-size:29.07px;color:#444444;transform:scaleX(0.9172);">NXDOMAIN</div>
<div style="position:absolute;left:556.00px;top:1074.00px;width:98.00px;height:69.60px;box-sizing:border-box;border:4px solid #5ec144;"></div>
<div style="position:absolute;left:822.70px;top:1074.00px;width:633.30px;height:69.60px;box-sizing:border-box;border:4px solid #5ec144;"></div>
<div style="position:absolute;left:1461.00px;top:1074.00px;width:273.80px;height:66.00px;box-sizing:border-box;border:4px solid #5ec144;"></div>
<div style="position:absolute;left:1740.20px;top:1074.00px;width:261.60px;height:66.00px;box-sizing:border-box;border:4px solid #5ec144;"></div>
<div style="position:absolute;left:0.00px;top:1529.00px;width:3812.00px;height:1.00px;background:#c4c4c4;"></div>
</body></html>
